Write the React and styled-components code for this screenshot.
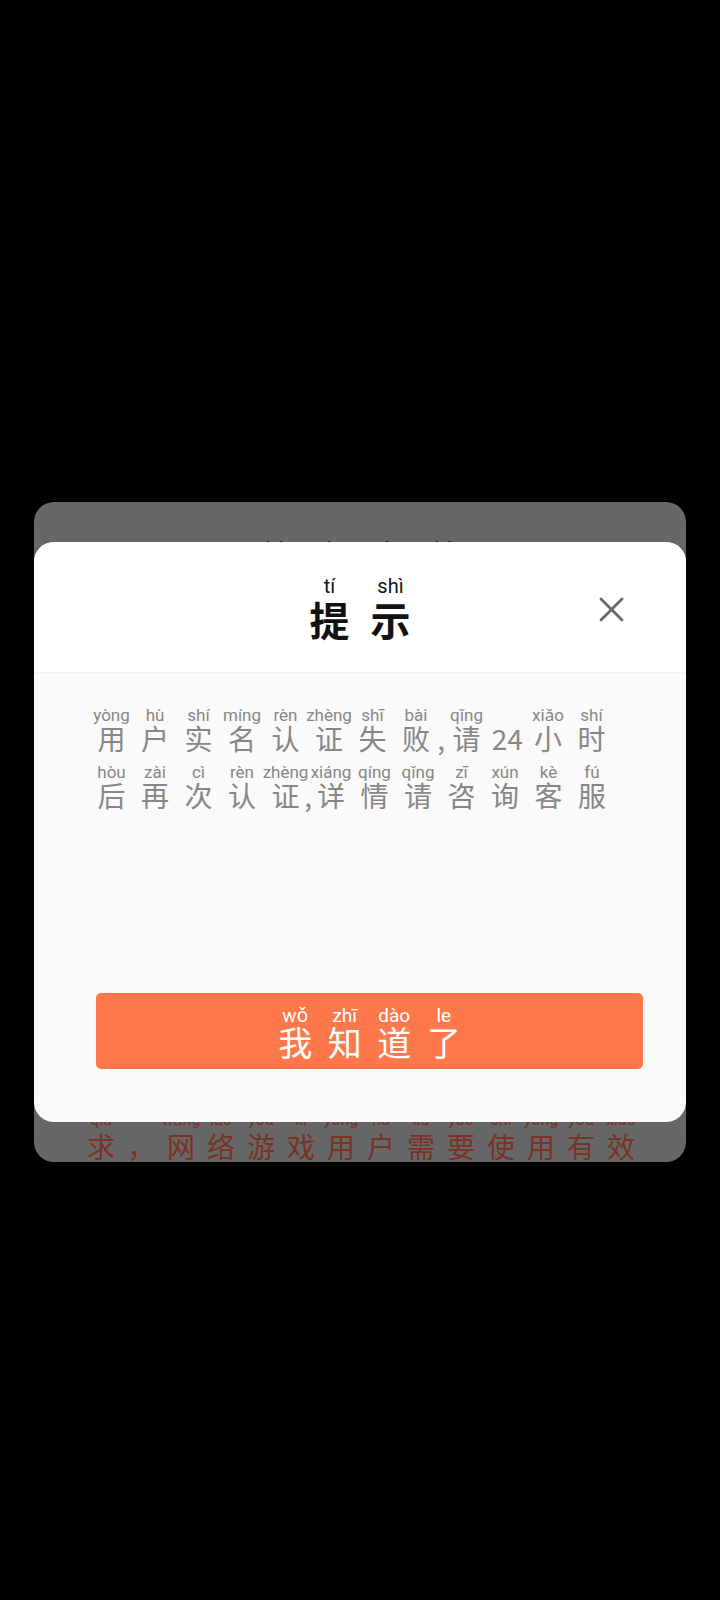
import React from "react";
import styled, { createGlobalStyle } from "styled-components";

const GlobalStyle = createGlobalStyle`
  html, body {
    margin: 0;
    padding: 0;
    background: #000;
  }
  body {
    min-height: 1600px;
    font-family: "Noto Sans CJK SC", "Noto Sans", sans-serif;
  }
`;

const sizes = {
  title: { py: 20, pyLh: 22, hz: 40, hzLh: 44, hzShift: 0, weight: 700, slot: 61 },
  body: { py: 17, pyLh: 20, hz: 28, hzLh: 28, hzShift: -1, weight: 400, slot: 43.5 },
  button: { py: 19, pyLh: 20, hz: 34, hzLh: 36, hzShift: -2, weight: 400, slot: 49.5 },
  back: { py: 16, pyLh: 20, hz: 28, hzLh: 32, hzShift: 0, weight: 400, slot: 40 },
};

const Page = styled.div`
  width: 720px;
  min-height: 1600px;
  background: #000;
  padding-top: 502px;
  box-sizing: border-box;
`;

const Stage = styled.div`
  position: relative;
  width: 652px;
  margin-left: 34px;
`;

const BackCard = styled.div`
  height: 660px;
  background: #676767;
  border-radius: 20px;
  overflow: hidden;
  display: flex;
  flex-direction: column;
  justify-content: space-between;
`;

const BackTitle = styled.div`
  display: flex;
  justify-content: center;
  margin-top: 36px;
  color: #161616;
`;

const BackLines = styled.div`
  display: flex;
  flex-direction: column;
  gap: 6px;
  padding-left: 47px;
  color: #7a3323;
`;

const Modal = styled.div`
  position: absolute;
  top: 40px;
  left: 0;
  width: 652px;
  height: 580px;
  border-radius: 20px;
  overflow: hidden;
  display: flex;
  flex-direction: column;
  background: #fafafa;
`;

const Header = styled.div`
  position: relative;
  height: 130px;
  flex: none;
  background: #fff;
  border-bottom: 1px solid #f1f1f1;
  display: flex;
  align-items: center;
  justify-content: center;
  color: #111;
`;

const Title = styled.div`
  display: flex;
  margin-top: 2px;
`;

const Close = styled.button`
  position: absolute;
  right: 62px;
  top: 55px;
  width: 25px;
  height: 25px;
  padding: 0;
  border: 0;
  background: none;
  display: flex;
  cursor: pointer;
`;

const Body = styled.div`
  flex: 1;
  display: flex;
  flex-direction: column;
  padding: 32px 0 53px;
`;

const Message = styled.div`
  display: flex;
  flex-direction: column;
  gap: 10px;
  padding-left: 55.75px;
  color: #878787;
`;

const Row = styled.div`
  display: flex;
  align-items: flex-end;
`;

const Button = styled.button`
  margin: auto 43px 0 62px;
  height: 76px;
  border: 0;
  border-radius: 5px;
  background: #ff784b;
  color: #fff;
  display: flex;
  align-items: center;
  justify-content: center;
  padding: 4px 0 0;
  cursor: pointer;
`;

const Ruby = styled.span`
  display: inline-flex;
  flex-direction: column;
  align-items: center;
  flex: none;
  width: ${(p) => (p.$w ? `${p.$w}px` : "auto")};
`;

const Py = styled.span`
  font-family: Roboto, "Noto Sans", sans-serif;
  font-size: ${(p) => p.$size}px;
  line-height: ${(p) => p.$lh}px;
  height: ${(p) => p.$lh}px;
  white-space: nowrap;
`;

const Hz = styled.span`
  font-family: "Noto Sans CJK SC", sans-serif;
  font-size: ${(p) => p.$size}px;
  font-weight: ${(p) => p.$weight};
  line-height: ${(p) => p.$lh}px;
  margin-top: ${(p) => p.$shift}px;
  white-space: nowrap;
`;

function RubyLine({ items, size }) {
  const s = sizes[size];
  return items.map(([py, hz, w], i) => (
    <Ruby key={i} $w={w ?? (py !== null ? s.slot : 0)}>
      <Py $size={s.py} $lh={s.pyLh}>
        {py || ""}
      </Py>
      <Hz $size={s.hz} $lh={s.hzLh} $shift={s.hzShift} $weight={s.weight}>
        {hz}
      </Hz>
    </Ruby>
  ));
}

const titleText = [
  ["tí", "提"],
  ["shì", "示"],
];

const backTitle = [
  ["shí", "实"],
  ["míng", "名"],
  ["rèn", "认"],
  ["zhèng", "证"],
];

const backLines = [
  [
    ["gēn", "根"],
    ["jù", "据"],
    ["guó", "国"],
    ["jiā", "家"],
    ["xīn", "新"],
    ["wén", "闻"],
    ["chū", "出"],
    ["bǎn", "版"],
    ["shǔ", "署"],
    ["xiāng", "相"],
    ["guān", "关"],
    ["guī", "规"],
    ["dìng", "定"],
    ["yào", "要"],
  ],
  [
    ["qiú", "求"],
    ["", "，"],
    ["wǎng", "网"],
    ["luò", "络"],
    ["yóu", "游"],
    ["xì", "戏"],
    ["yòng", "用"],
    ["hù", "户"],
    ["xū", "需"],
    ["yào", "要"],
    ["shǐ", "使"],
    ["yòng", "用"],
    ["yǒu", "有"],
    ["xiào", "效"],
  ],
];

const messageLines = [
  [
    ["yòng", "用"],
    ["hù", "户"],
    ["shí", "实"],
    ["míng", "名"],
    ["rèn", "认"],
    ["zhèng", "证"],
    ["shī", "失"],
    ["bài", "败"],
    [null, ",", 7],
    ["qǐng", "请"],
    [null, "24", 38],
    ["xiǎo", "小"],
    ["shí", "时"],
  ],
  [
    ["hòu", "后"],
    ["zài", "再"],
    ["cì", "次"],
    ["rèn", "认"],
    ["zhèng", "证"],
    [null, ",", 2],
    ["xiáng", "详"],
    ["qíng", "情"],
    ["qǐng", "请"],
    ["zī", "咨"],
    ["xún", "询"],
    ["kè", "客"],
    ["fú", "服"],
  ],
];

const buttonText = [
  ["wǒ", "我"],
  ["zhī", "知"],
  ["dào", "道"],
  ["le", "了"],
];

function CloseIcon() {
  return (
    <svg width="25" height="25" viewBox="0 0 25 25" fill="none">
      <path
        d="M2 2 L23 23 M23 2 L2 23"
        stroke="#666"
        strokeWidth="2.8"
        strokeLinecap="round"
      />
    </svg>
  );
}

export default function App() {
  return (
    <>
      <GlobalStyle />
      <Page>
        <Stage>
          <BackCard>
            <BackTitle>
              <RubyLine items={backTitle} size="title" />
            </BackTitle>
            <BackLines>
              {backLines.map((line, i) => (
                <Row key={i}>
                  <RubyLine items={line} size="back" />
                </Row>
              ))}
            </BackLines>
          </BackCard>

          <Modal>
            <Header>
              <Title>
                <RubyLine items={titleText} size="title" />
              </Title>
              <Close aria-label="关闭">
                <CloseIcon />
              </Close>
            </Header>
            <Body>
              <Message>
                {messageLines.map((line, i) => (
                  <Row key={i}>
                    <RubyLine items={line} size="body" />
                  </Row>
                ))}
              </Message>
              <Button>
                <RubyLine items={buttonText} size="button" />
              </Button>
            </Body>
          </Modal>
        </Stage>
      </Page>
    </>
  );
}
